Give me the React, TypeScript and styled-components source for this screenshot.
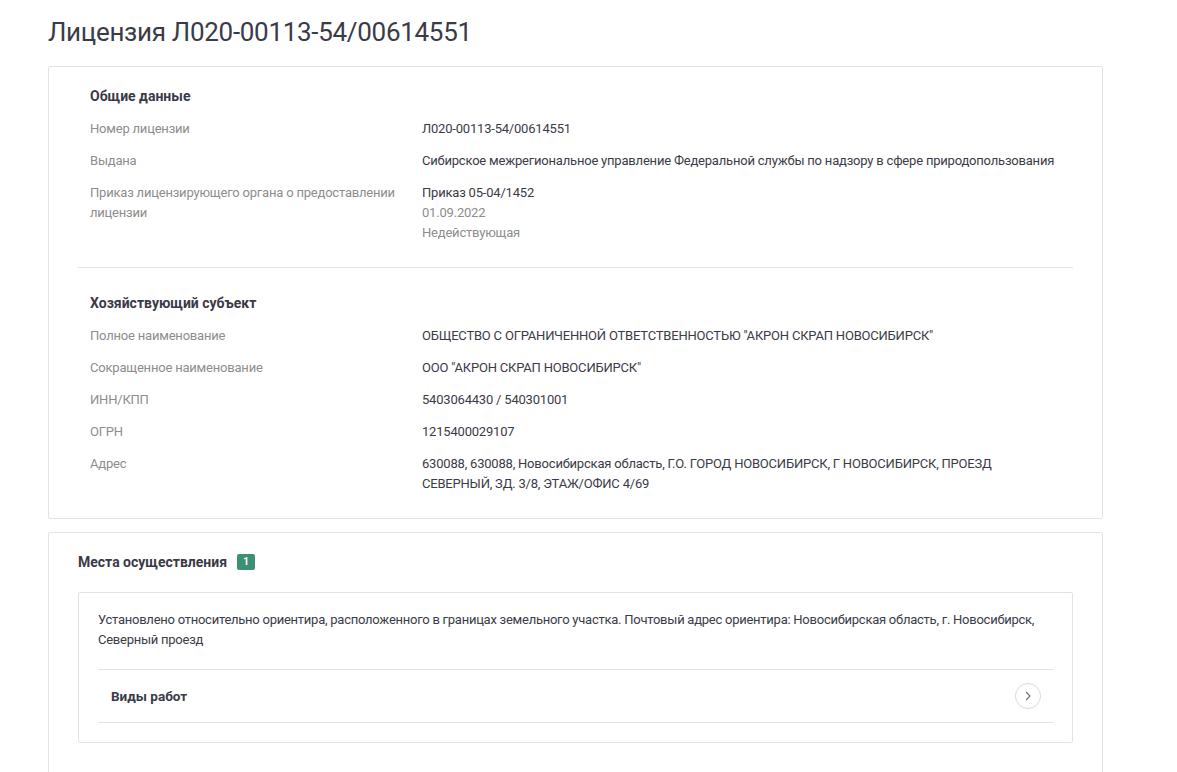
import React from 'react'
import styled, { createGlobalStyle } from 'styled-components'

const GlobalStyle = createGlobalStyle`
  body {
    margin: 0;
    background: #fff;
    font-family: Roboto, "Liberation Sans", sans-serif;
    color: #3b3b47;
  }
`

const UI = {
  Page: styled.div`
    padding: 16px 74px 0 48px;
    width: 1055px;
  `,
  Title: styled.h1`
    margin: 0 0 17px;
    font-size: 26px;
    line-height: 33px;
    font-weight: 400;
    letter-spacing: -0.3px;
    color: #3b3b47;
  `,
  Card: styled.div<{ $tail?: number }>`
    border: 1px solid #e3e3e3;
    border-radius: 2px;
    padding: 19px 29px ${({ $tail }) => $tail ?? 24}px;
    margin-bottom: 13px;
  `,
  Section: styled.div`
    padding: 0 12px;
  `,
  SectionTitle: styled.div`
    font-size: 14px;
    line-height: 20px;
    font-weight: 700;
    color: #3a3a47;
    margin-bottom: 13px;
  `,
  Rows: styled.div`
    display: grid;
    grid-template-columns: 332px 1fr;
    row-gap: 12px;
    font-size: 13px;
    line-height: 20px;
    letter-spacing: -0.2px;
  `,
  Label: styled.div`
    color: #8d8d8d;
    padding-right: 12px;
  `,
  Value: styled.div`
    color: #3b3b47;
  `,
  Muted: styled.div`
    color: #8d8d8d;
  `,
  Divider: styled.hr`
    border: 0;
    border-top: 1px solid #e3e3e3;
    margin: 24px 0 25px;
  `,
  CardHead: styled.div`
    display: flex;
    align-items: center;
    gap: 10px;
    font-size: 14px;
    line-height: 20px;
    font-weight: 700;
    color: #3a3a47;
    margin-bottom: 20px;
  `,
  Badge: styled.span`
    display: inline-flex;
    align-items: center;
    justify-content: center;
    width: 18px;
    height: 16px;
    border-radius: 2px;
    background: #3f8f76;
    color: #fff;
    font-size: 10px;
    font-weight: 700;
  `,
  Place: styled.div`
    border: 1px solid #e3e3e3;
    border-radius: 2px;
    padding: 17px 19px 19px;
  `,
  PlaceText: styled.div`
    font-size: 13px;
    line-height: 19.5px;
    letter-spacing: -0.25px;
    color: #3b3b47;
    padding-bottom: 20px;
    border-bottom: 1px solid #e3e3e3;
  `,
  Works: styled.div`
    display: flex;
    align-items: center;
    justify-content: space-between;
    height: 52px;
    padding: 0 12px 0 13px;
    border-bottom: 1px solid #e3e3e3;
    font-size: 13.5px;
    font-weight: 700;
    color: #3a3a47;
  `,
  Round: styled.button`
    width: 26px;
    height: 26px;
    border-radius: 50%;
    border: 1px solid #dadada;
    background: #fff;
    display: flex;
    align-items: center;
    justify-content: center;
    padding: 0;
    color: #6b6b74;
  `,
}

const general: [string, React.ReactNode][] = [
  ['Номер лицензии', 'Л020-00113-54/00614551'],
  ['Выдана', 'Сибирское межрегиональное управление Федеральной службы по надзору в сфере природопользования'],
  [
    'Приказ лицензирующего органа о предоставлении лицензии',
    <>
      Приказ 05-04/1452
      <UI.Muted>01.09.2022</UI.Muted>
      <UI.Muted>Недействующая</UI.Muted>
    </>,
  ],
]

const subject: [string, React.ReactNode][] = [
  ['Полное наименование', 'ОБЩЕСТВО С ОГРАНИЧЕННОЙ ОТВЕТСТВЕННОСТЬЮ "АКРОН СКРАП НОВОСИБИРСК"'],
  ['Сокращенное наименование', 'ООО "АКРОН СКРАП НОВОСИБИРСК"'],
  ['ИНН/КПП', '5403064430 / 540301001'],
  ['ОГРН', '1215400029107'],
  ['Адрес', '630088, 630088, Новосибирская область, Г.О. ГОРОД НОВОСИБИРСК, Г НОВОСИБИРСК, ПРОЕЗД СЕВЕРНЫЙ, ЗД. 3/8, ЭТАЖ/ОФИС 4/69'],
]

const Rows = ({ items }: { items: [string, React.ReactNode][] }) => (
  <UI.Rows>
    {items.map(([label, value]) => (
      <React.Fragment key={label}>
        <UI.Label>{label}</UI.Label>
        <UI.Value>{value}</UI.Value>
      </React.Fragment>
    ))}
  </UI.Rows>
)

export default function App () {
  return (
    <UI.Page>
      <GlobalStyle />
      <UI.Title>Лицензия Л020-00113-54/00614551</UI.Title>
      <UI.Card>
        <UI.Section>
          <UI.SectionTitle>Общие данные</UI.SectionTitle>
          <Rows items={general} />
        </UI.Section>
        <UI.Divider />
        <UI.Section>
          <UI.SectionTitle>Хозяйствующий субъект</UI.SectionTitle>
          <Rows items={subject} />
        </UI.Section>
      </UI.Card>
      <UI.Card $tail={40}>
        <UI.CardHead>
          Места осуществления <UI.Badge>1</UI.Badge>
        </UI.CardHead>
        <UI.Place>
          <UI.PlaceText>
            Установлено относительно ориентира, расположенного в границах земельного участка. Почтовый адрес ориентира: Новосибирская область, г. Новосибирск, Северный проезд
          </UI.PlaceText>
          <UI.Works>
            Виды работ
            <UI.Round aria-label="Открыть">
              <svg width="12" height="12" viewBox="0 0 12 12" fill="none">
                <path d="M4.2 2 L8 6 L4.2 10" stroke="currentColor" strokeWidth="1.1" />
              </svg>
            </UI.Round>
          </UI.Works>
        </UI.Place>
      </UI.Card>
    </UI.Page>
  )
}
